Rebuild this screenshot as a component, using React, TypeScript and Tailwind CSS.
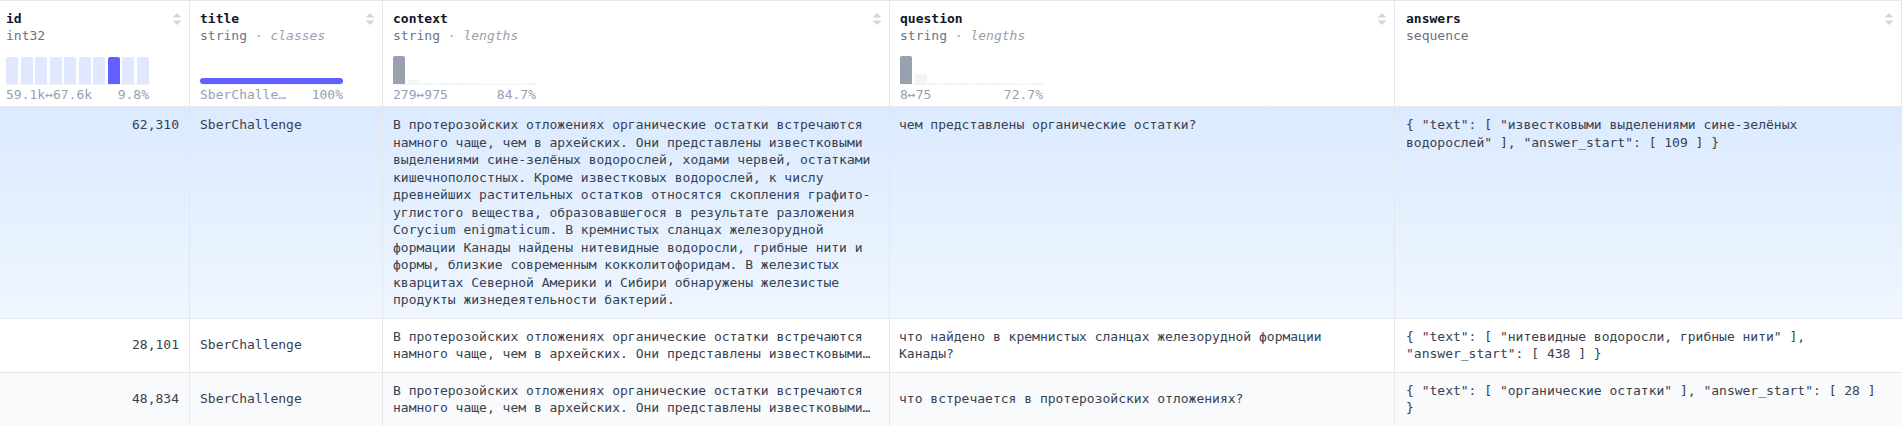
import React from 'react'

const CONTEXT =
  'В протерозойских отложениях органические остатки встречаются намного чаще, чем в архейских. Они представлены известковыми выделениями сине-зелёных водорослей, ходами червей, остатками кишечнополостных. Кроме известковых водорослей, к числу древнейших растительных остатков относятся скопления графито-углистого вещества, образовавшегося в результате разложения Corycium enigmaticum. В кремнистых сланцах железорудной формации Канады найдены нитевидные водоросли, грибные нити и формы, близкие современным кокколитофоридам. В железистых кварцитах Северной Америки и Сибири обнаружены железистые продукты жизнедеятельности бактерий.'

const rows = [
  {
    id: '62,310',
    question: 'чем представлены органические остатки?',
    answers: '{ "text": [ "известковыми выделениями сине-зелёных водорослей" ], "answer_start": [ 109 ] }',
    expanded: true,
    bg: 'bg-linear-to-b from-blue-100 to-blue-50',
  },
  {
    id: '28,101',
    question: 'что найдено в кремнистых сланцах железорудной формации Канады?',
    answers: '{ "text": [ "нитевидные водоросли, грибные нити" ], "answer_start": [ 438 ] }',
    expanded: false,
    bg: 'bg-white',
  },
  {
    id: '48,834',
    question: 'что встречается в протерозойских отложениях?',
    answers: '{ "text": [ "органические остатки" ], "answer_start": [ 28 ] }',
    expanded: false,
    bg: 'bg-gray-50',
  },
]

const cols = 'grid grid-cols-[190px_193px_507px_505px_507px]'

function SortIcon() {
  return (
    <svg width="10" height="14" viewBox="0 0 10 14" className="shrink-0 text-gray-300">
      <path d="M5 1 L9.5 5.5 H0.5 Z" fill="currentColor" />
      <path d="M5 13 L9.5 8.5 H0.5 Z" fill="currentColor" />
    </svg>
  )
}

function ColumnHead({ name, type, sub, pad = 'pl-2.5', children }: { name: string; type: string; sub?: string; pad?: string; children?: React.ReactNode }) {
  return (
    <div className={`relative h-[105px] border-r border-gray-200 pt-[9px] ${pad} pr-2`}>
      <div className="absolute right-[7px] top-[11px]">
        <SortIcon />
      </div>
      <div className="h-[17px] leading-[17px] font-bold text-gray-900">{name}</div>
      <div className="h-[17px] leading-[17px] text-gray-500">
        {type}
        {sub && (
          <>
            <span className="text-gray-400"> · </span>
            <span className="italic text-gray-400">{sub}</span>
          </>
        )}
      </div>
      {children}
    </div>
  )
}

function Histogram({ bars, labels }: { bars: React.ReactNode; labels: [string, string] }) {
  return (
    <div className="mt-[13px] w-[143px]">
      <div className="flex h-[28px] items-end gap-[2.5px] border-b border-gray-100">{bars}</div>
      <div className="mt-[2px] flex h-[16px] justify-between leading-[16px] text-gray-400">
        <span>{labels[0]}</span>
        <span>{labels[1]}</span>
      </div>
    </div>
  )
}

function LenBars({ heights }: { heights: number[] }) {
  return (
    <>
      {heights.map((h, i) => (
        <div
          key={i}
          className={`flex-1 rounded-t-[2px] ${i === 0 ? 'bg-gray-400' : 'bg-gray-100'}`}
          style={{ height: h }}
        />
      ))}
    </>
  )
}

export default function App() {
  return (
    <div className="h-[426px] w-[1902px] overflow-hidden bg-white font-['DejaVu_Sans_Mono',monospace] text-[13px] text-[#374151]">
      {/* Header */}
      <div className={`${cols} border-t border-b border-gray-200 bg-white`}>
        <ColumnHead name="id" type="int32" pad="pl-1.5">
          <Histogram
            labels={['59.1k↔67.6k', '9.8%']}
            bars={Array.from({ length: 10 }).map((_, i) => (
              <div key={i} className={`h-full flex-1 rounded-t-[2px] ${i === 7 ? 'bg-indigo-500' : 'bg-indigo-100'}`} />
            ))}
          />
        </ColumnHead>
        <ColumnHead name="title" type="string" sub="classes">
          <Histogram
            labels={['SberChalle…', '100%']}
            bars={<div className="h-[6px] w-full rounded-full bg-indigo-500" />}
          />
        </ColumnHead>
        <ColumnHead name="context" type="string" sub="lengths">
          <Histogram labels={['279↔975', '84.7%']} bars={<LenBars heights={[28, 4, 1, 1, 1, 1, 0, 0, 0, 1]} />} />
        </ColumnHead>
        <ColumnHead name="question" type="string" sub="lengths">
          <Histogram labels={['8↔75', '72.7%']} bars={<LenBars heights={[28, 10, 1, 1, 1, 1, 1, 1, 0, 1]} />} />
        </ColumnHead>
        <ColumnHead name="answers" type="sequence" pad="pl-[11px]" />
      </div>

      {/* Rows */}
      {rows.map((r) => (
        <div
          key={r.id}
          className={`${cols} border-b border-gray-200 ${r.bg} ${r.expanded ? 'items-stretch' : ''}`}
        >
          <div className={`flex border-r border-gray-200 py-[9px] pr-2.5 justify-end leading-[17.5px] ${r.expanded ? 'items-start' : 'items-center'}`}>
            {r.id}
          </div>
          <div className={`flex border-r border-gray-200 py-[9px] pl-2.5 leading-[17.5px] ${r.expanded ? 'items-start' : 'items-center'}`}>
            SberChallenge
          </div>
          <div className="border-r border-gray-200 py-[9px] pl-2.5 pr-2 leading-[17.5px]">
            <p className={r.expanded ? '' : 'line-clamp-2'}>{CONTEXT}</p>
          </div>
          <div className={`flex border-r border-gray-200 py-[9px] pl-[9px] pr-2.5 leading-[17.5px] ${r.expanded ? 'items-start' : 'items-center'}`}>
            <p>{r.question}</p>
          </div>
          <div className={`flex py-[9px] pl-[11px] pr-3 leading-[17.5px] ${r.expanded ? 'items-start' : 'items-center'}`}>
            <p>{r.answers}</p>
          </div>
        </div>
      ))}
    </div>
  )
}
